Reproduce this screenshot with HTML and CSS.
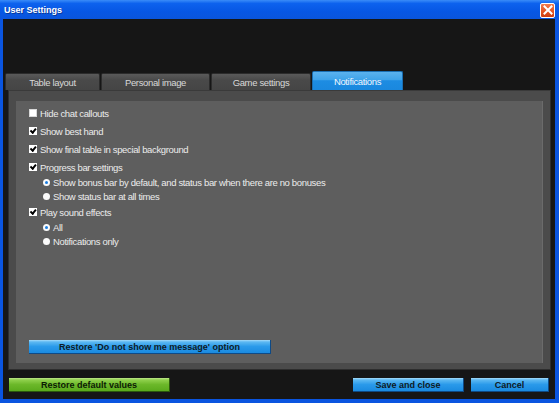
FILE: index.html
```html
<!DOCTYPE html>
<html>
<head>
<meta charset="utf-8">
<title>User Settings</title>
<link rel="stylesheet" href="styles.css">
</head>
<body>
<div class="window">
  <div class="titlebar">
    <span class="title">User Settings</span>
    <span class="close-btn">
      <svg width="10" height="10" viewBox="0 0 10 10"><path d="M1.5 1.5 L8.5 8.5 M8.5 1.5 L1.5 8.5" stroke="#fff" stroke-width="2" stroke-linecap="square"/></svg>
    </span>
  </div>
  <div class="client">
    <div class="tabs">
      <div class="tab tab-1">Table layout</div>
      <div class="tab tab-2">Personal image</div>
      <div class="tab tab-3">Game settings</div>
      <div class="tab tab-4 active">Notifications</div>
    </div>
    <div class="panel">
      <div class="inner">
        <div class="options">
          <div class="row check"><span class="box"></span>Hide chat callouts</div>
          <div class="row check"><span class="box on"></span>Show best hand</div>
          <div class="row check"><span class="box on"></span>Show final table in special background</div>
          <div class="row check"><span class="box on"></span>Progress bar settings</div>
          <div class="group">
            <div class="row radio"><span class="dot on"></span>Show bonus bar by default, and status bar when there are no bonuses</div>
            <div class="row radio"><span class="dot"></span>Show status bar at all times</div>
          </div>
          <div class="row check"><span class="box on"></span>Play sound effects</div>
          <div class="group">
            <div class="row radio"><span class="dot on"></span>All</div>
            <div class="row radio"><span class="dot"></span>Notifications only</div>
          </div>
        </div>
        <div class="btn blue restore">Restore 'Do not show me message' option</div>
      </div>
    </div>
    <div class="footer">
      <div class="btn green defaults">Restore default values</div>
      <div class="footer-right">
        <div class="btn blue save">Save and close</div>
        <div class="btn blue cancel">Cancel</div>
      </div>
    </div>
  </div>
</div>
</body>
</html>
```
FILE: styles.css
```css
html, body {
  margin: 0;
  padding: 0;
  background: #151515;
}

body {
  font-family: "Liberation Sans", Arial, sans-serif;
  font-size: 9.5px;
  letter-spacing: -0.35px;
}

.window {
  width: 559px;
  height: 403px;
  box-sizing: border-box;
  display: flex;
  flex-direction: column;
  background: #0a55e0;
}

/* XP style caption */
.titlebar {
  height: 19px;
  flex: none;
  display: flex;
  align-items: center;
  justify-content: space-between;
  padding: 0 4px 0 4px;
  background: linear-gradient(#3a8cf8 0%, #0d62ee 18%, #0757e4 60%, #0a55dc 100%);
}

.title {
  color: #fff;
  font-weight: bold;
  font-size: 9px;
  letter-spacing: 0;
  text-shadow: 1px 1px 0 #0a3a9a;
}

.close-btn {
  width: 13px;
  height: 13px;
  border: 1px solid #fff;
  border-radius: 2px;
  background: linear-gradient(#f27c4e, #e2501e 60%, #cc3e12);
  display: flex;
  align-items: center;
  justify-content: center;
  margin-top: 1px;
}

.close-btn svg { display: block; }

.client {
  flex: 1;
  margin: 0 4px 4px 3px;
  background: #161616;
  display: flex;
  flex-direction: column;
  padding-top: 52px;
}

/* tab strip */
.tabs {
  display: flex;
  align-items: flex-end;
  padding-left: 2px;
  gap: 1px;
  height: 19px;
}

.tab {
  height: 17px;
  box-sizing: border-box;
  display: flex;
  align-items: center;
  justify-content: center;
  color: #d8d8d8;
  background: linear-gradient(#5a5a5a, #494949 40%, #454545);
  border: 1px solid #2c2c2c;
  border-bottom: none;
  border-radius: 2px 2px 0 0;
}

.tab-1 { width: 95px; }
.tab-2 { width: 109px; }
.tab-3 { width: 100px; }
.tab-4 { width: 91px; }

.tab.active {
  height: 19px;
  color: #f2f8ff;
  border-color: #1a6fb4;
  background: linear-gradient(#5bb2ee 0, #3ea3ea 45%, #1d8ce2 48%, #1a88de 100%);
}

/* settings panel */
.panel {
  height: 280px;
  box-sizing: border-box;
  margin: 0 4px 0 5px;
  padding: 10px 7px 6px 7px;
  background: #4b4b4b;
  border: 1px solid #2e2e2e;
  border-top-color: #3a3a3a;
  display: flex;
}

.inner {
  flex: 1;
  background: #5e5e5e;
  border-right: 1px solid #6b6b6b;
  padding: 3px 0 9px 13px;
  display: flex;
  flex-direction: column;
}

.options {
  flex: 1;
  color: #ececec;
}

.row {
  display: flex;
  align-items: center;
  white-space: nowrap;
}

.row.check {
  height: 18px;
}

.group { margin-top: -1px; }

.row.radio {
  height: 14px;
  padding-left: 14px;
}

.box {
  width: 8px;
  height: 8px;
  box-sizing: border-box;
  background: #fff;
  border: 1px solid #d8d8d8;
  margin-right: 3px;
  position: relative;
  flex: none;
}

.box.on {
  border-color: #fff;
}

.box.on::after {
  content: "";
  position: absolute;
  left: 1px;
  top: 0px;
  width: 4px;
  height: 2px;
  border-left: 2px solid #000;
  border-bottom: 2px solid #000;
  transform: rotate(-50deg);
  transform-origin: 3px 3px;
}

.dot {
  width: 7px;
  height: 7px;
  border-radius: 50%;
  background: #fafafa;
  margin-right: 3px;
  position: relative;
  flex: none;
}

.dot.on::after {
  content: "";
  position: absolute;
  left: 2px;
  top: 2px;
  width: 3px;
  height: 3px;
  border-radius: 50%;
  background: #1a7de0;
}

/* buttons */
.btn {
  height: 14px;
  box-sizing: border-box;
  display: flex;
  align-items: center;
  justify-content: center;
  color: #0e1a24;
  font-weight: bold;
  font-size: 9px;
  letter-spacing: 0;
  white-space: nowrap;
}

.btn.blue {
  background: linear-gradient(#a6dcfa 0, #5cb8f2 15%, #2a9aea 50%, #1a8ae0 100%);
  border-bottom: 1px solid #0e4a86;
  border-right: 1px solid #0e4a86;
}

.btn.green {
  background: linear-gradient(#bfe88a 0, #8fd04c 15%, #6cb82a 50%, #5aaa1c 100%);
  border-bottom: 1px solid #2c5a0c;
  border-right: 1px solid #2c5a0c;
  color: #0c1a04;
}

.restore { width: 242px; }

.footer {
  display: flex;
  justify-content: space-between;
  margin: 8px 6px 0 6px;
}

.footer-right {
  display: flex;
  gap: 7px;
}

.defaults { width: 161px; }
.save { width: 111px; }
.cancel { width: 78px; }
```
